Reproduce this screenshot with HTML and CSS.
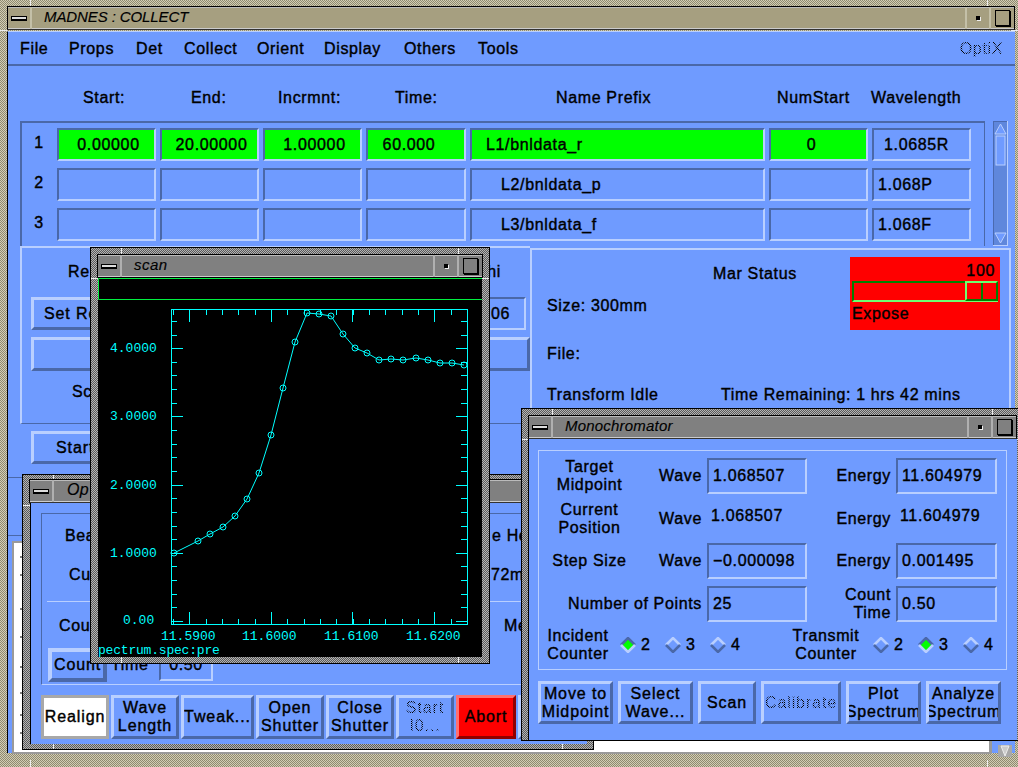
FILE: index.html
```
<!DOCTYPE html>
<html lang="en">
<head>
    <meta charset="UTF-8">
    <title>MADNES : COLLECT</title>
    <link rel="stylesheet" href="styles.css">
</head>
<body>
<div class="desktop">

    <!-- main collect window -->
    <div class="window window-main">
        <div class="titlebar">
            <div class="tb-btn tb-menu"><span class="icon-dash"></span></div>
            <div class="tb-title tb-title-main">MADNES : COLLECT</div>
            <div class="tb-btn tb-min"><span class="icon-dot"></span></div>
            <div class="tb-btn tb-max"><span class="icon-square"></span></div>
        </div>
        <div class="main-body">
            <div class="menubar">
                <span>File</span><span>Props</span><span>Det</span><span>Collect</span>
                <span>Orient</span><span>Display</span><span>Others</span><span>Tools</span>
                <span class="stipple optix">OptiX</span>
            </div>

            <div class="col-heads">
                <span>Start:</span><span>End:</span><span>Incrmnt:</span><span>Time:</span>
                <span>Name Prefix</span><span>NumStart</span><span>Wavelength</span>
            </div>

            <div class="table-row">
                <div class="scan-table">
                    <span class="row-num">1</span>
                    <div class="field on centered">0.00000</div>
                    <div class="field on centered">20.00000</div>
                    <div class="field on centered">1.00000</div>
                    <div class="field on centered off-left">60.000</div>
                    <div class="field on name-first">L1/bnldata_r</div>
                    <div class="field on centered off-left">0</div>
                    <div class="field wave-first">1.0685R</div>

                    <span class="row-num">2</span>
                    <div class="field"></div>
                    <div class="field"></div>
                    <div class="field"></div>
                    <div class="field"></div>
                    <div class="field name-rest">L2/bnldata_p</div>
                    <div class="field"></div>
                    <div class="field">1.068P</div>

                    <span class="row-num">3</span>
                    <div class="field"></div>
                    <div class="field"></div>
                    <div class="field"></div>
                    <div class="field"></div>
                    <div class="field name-rest">L3/bnldata_f</div>
                    <div class="field"></div>
                    <div class="field">1.068F</div>
                </div>
                <svg class="scrollbar" width="15" height="125" viewBox="0 0 15 125">
                    <rect width="15" height="125" fill="#5f87dc"/>
                    <path d="M0 125V0H15" fill="none" stroke="#4a6ab0" stroke-width="2"/>
                    <path d="M15 0V125H0" fill="none" stroke="#b9cfff" stroke-width="2"/>
                    <path d="M7.5 3L13 13H2Z" fill="#6f9bff" stroke="#b9cfff"/>
                    <rect x="3" y="15" width="9" height="29" fill="#6f9bff" stroke="#b9cfff"/>
                    <path d="M7.5 122L13 112H2Z" fill="#6f9bff" stroke="#b9cfff"/>
                </svg>
            </div>

            <div class="panels">
                <div class="panel-left">
                    <div class="pl-row pl-head"><span class="re">Re</span><span>hi</span></div>
                    <div class="pl-row pl-controls">
                        <div class="btn btn-setre">Set Re</div>
                        <div class="field field-phi">06</div>
                    </div>
                    <div class="btn pl-wide"></div>
                    <div class="pl-sc">Sc</div>
                </div>
                <div class="panel-right">
                    <span class="mar-title">Mar Status</span>
                    <div class="mar-box">
                        <span class="mar-pct">100</span>
                        <div class="mar-slider"><div class="mar-thumb"></div></div>
                        <span>Expose</span>
                    </div>
                    <span class="mar-size">Size: 300mm</span>
                    <span class="mar-file">File:</span>
                    <span class="mar-idle">Transform Idle</span>
                    <span class="mar-time">Time Remaining: 1 hrs 42 mins</span>
                </div>
            </div>

            <div class="btn btn-start">Start</div>
            <div class="rule rule-a"></div>
            <div class="rule rule-b"></div>

            <div class="list-row">
                <div class="list-box">
                    <svg class="list-ticks" width="3" height="200" viewBox="0 0 3 200">
                        <path d="M0 14H3M0 32H3M0 66H3M0 94H3M0 124H3M0 150H3M0 172H3M0 190H3" stroke="#000" fill="none"/>
                    </svg>
                </div>
                <div class="list-arrow">
                    <svg width="14" height="12" viewBox="0 0 14 12"><path d="M3 1H11L7 11Z" fill="#ccc" stroke="#eee"/></svg>
                </div>
            </div>
        </div>
    </div>

    <!-- optics window, mostly hidden -->
    <div class="window window-optics">
        <div class="titlebar">
            <div class="tb-btn tb-menu"><span class="icon-dash"></span></div>
            <div class="tb-title tb-title-optics">Op</div>
        </div>
        <div class="optics-body">
            <div class="optics-frame">
                <div class="op-row op-beam"><span>Bea</span><span>e He</span></div>
                <div class="op-row op-cur"><span>Cu</span><span>72mi</span></div>
                <div class="op-sep"></div>
                <div class="op-row op-cou"><span>Cou</span><span>Me</span></div>
                <div class="op-count">
                    <div class="btn btn-count">Count</div>
                    <span class="op-time">Time</span>
                    <div class="field op-val">0.50</div>
                </div>
            </div>
            <div class="optics-btns">
                <div class="btn btn-white">Realign</div>
                <div class="btn">Wave<br>Length</div>
                <div class="btn">Tweak...</div>
                <div class="btn">Open<br>Shutter</div>
                <div class="btn">Close<br>Shutter</div>
                <div class="btn"><span class="stipple">Start<br>I0...</span></div>
                <div class="btn btn-red">Abort</div>
                <div class="btn"></div>
            </div>
        </div>
    </div>

    <!-- scan plot -->
    <div class="window window-scan">
        <div class="titlebar">
            <div class="tb-btn tb-menu"><span class="icon-dash"></span></div>
            <div class="tb-title tb-title-scan">scan</div>
            <div class="tb-btn tb-min"><span class="icon-dot"></span></div>
            <div class="tb-btn tb-max"><span class="icon-square"></span></div>
        </div>
        <svg class="plot" width="384" height="380" viewBox="98 278 384 380">
            <rect x="98" y="278" width="384" height="380" fill="#000"/>
            <path d="M98.5 300.5V279.5H482M98.5 300.5H482" stroke="#00f040" fill="none"/>
            <g class="axes">
                <rect x="171.5" y="310.5" width="296" height="315" fill="none"/>
                <!-- ticks: a wide dashed line gives a row of equal ticks -->
                <line x1="174" y1="623" x2="174" y2="311" stroke-width="6" stroke-dasharray="1 12.64"/>
                <line x1="177" y1="623" x2="177" y2="311" stroke-width="11" stroke-dasharray="1 67.2"/>
                <line x1="464" y1="623" x2="464" y2="311" stroke-width="6" stroke-dasharray="1 12.64"/>
                <line x1="461.5" y1="623" x2="461.5" y2="311" stroke-width="11" stroke-dasharray="1 67.2"/>
                <line x1="173" y1="313.5" x2="467" y2="313.5" stroke-width="5" stroke-dasharray="1 15.34"/>
                <line x1="189" y1="317" x2="467" y2="317" stroke-width="12" stroke-dasharray="1 80.7"/>
                <line x1="173" y1="622.5" x2="467" y2="622.5" stroke-width="5" stroke-dasharray="1 15.34"/>
                <line x1="189" y1="619" x2="467" y2="619" stroke-width="12" stroke-dasharray="1 80.7"/>
            </g>
            <g class="curve">
                <polyline points="174,554 198,542 210,535 223,528 235,517 247,500 259,474 271,436 283,389 295,343 307,314 319,315 331,317 343,335 355,349 367,354 379,361 391,360 403,361 416,359 428,361 440,364 452,364 464,366"/>
                <circle cx="174" cy="554" r="3"/><circle cx="198" cy="542" r="3"/>
                <circle cx="210" cy="535" r="3"/><circle cx="223" cy="528" r="3"/>
                <circle cx="235" cy="517" r="3"/><circle cx="247" cy="500" r="3"/>
                <circle cx="259" cy="474" r="3"/><circle cx="271" cy="436" r="3"/>
                <circle cx="283" cy="389" r="3"/><circle cx="295" cy="343" r="3"/>
                <circle cx="307" cy="314" r="3"/><circle cx="319" cy="315" r="3"/>
                <circle cx="331" cy="317" r="3"/><circle cx="343" cy="335" r="3"/>
                <circle cx="355" cy="349" r="3"/><circle cx="367" cy="354" r="3"/>
                <circle cx="379" cy="361" r="3"/><circle cx="391" cy="360" r="3"/>
                <circle cx="403" cy="361" r="3"/><circle cx="416" cy="359" r="3"/>
                <circle cx="428" cy="361" r="3"/><circle cx="440" cy="364" r="3"/>
                <circle cx="452" cy="364" r="3"/><circle cx="464" cy="366" r="3"/>
            </g>
            <g class="plot-text">
                <text x="110" y="353">4.0000</text>
                <text x="110" y="421">3.0000</text>
                <text x="110" y="490">2.0000</text>
                <text x="110" y="558">1.0000</text>
                <text x="123" y="625">0.00</text>
                <text x="161" y="641">11.5900</text>
                <text x="242" y="641">11.6000</text>
                <text x="324" y="641">11.6100</text>
                <text x="406" y="641">11.6200</text>
                <text class="plot-file" x="98" y="655">pectrum.spec:pre</text>
            </g>
        </svg>
    </div>

    <!-- monochromator -->
    <div class="window window-mono">
        <div class="titlebar">
            <div class="tb-btn tb-menu"><span class="icon-dash"></span></div>
            <div class="tb-title tb-title-mono">Monochromator</div>
            <div class="tb-btn tb-min"><span class="icon-dot"></span></div>
            <div class="tb-btn tb-max"><span class="icon-square"></span></div>
        </div>
        <div class="mono-body">
            <div class="mono-frame">
                <div class="mono-grid">
                    <span class="m-label">Target<br>Midpoint</span>
                    <span class="m-key">Wave</span>
                    <div class="field">1.068507</div>
                    <span class="m-key">Energy</span>
                    <div class="field">11.604979</div>

                    <span class="m-label">Current<br>Position</span>
                    <span class="m-key">Wave</span>
                    <span class="m-read">1.068507</span>
                    <span class="m-key">Energy</span>
                    <span class="m-read">11.604979</span>

                    <span class="m-label">Step Size</span>
                    <span class="m-key">Wave</span>
                    <div class="field">&minus;0.000098</div>
                    <span class="m-key">Energy</span>
                    <div class="field">0.001495</div>

                    <span class="m-key m-points">Number of Points</span>
                    <div class="field">25</div>
                    <span class="m-key m-count">Count<br>Time</span>
                    <div class="field">0.50</div>
                </div>
                <div class="counters">
                    <span class="c-label c-inc">Incident<br>Counter</span>
                    <span class="radio"><svg class="dia" width="16" height="16" viewBox="0 0 16 16"><path class="dia-fill" d="M8 1L15 8L8 15L1 8Z"/><path class="dia-lo" d="M1 8L8 1L15 8"/><path class="dia-hi" d="M1 8L8 15L15 8"/></svg>2</span>
                    <span class="radio"><svg class="dia" width="16" height="16" viewBox="0 0 16 16"><path class="dia-hi" d="M1 8L8 1L15 8"/><path class="dia-lo" d="M1 8L8 15L15 8"/></svg>3</span>
                    <span class="radio"><svg class="dia" width="16" height="16" viewBox="0 0 16 16"><path class="dia-hi" d="M1 8L8 1L15 8"/><path class="dia-lo" d="M1 8L8 15L15 8"/></svg>4</span>
                    <span class="c-label c-trans">Transmit<br>Counter</span>
                    <span class="radio"><svg class="dia" width="16" height="16" viewBox="0 0 16 16"><path class="dia-hi" d="M1 8L8 1L15 8"/><path class="dia-lo" d="M1 8L8 15L15 8"/></svg>2</span>
                    <span class="radio"><svg class="dia" width="16" height="16" viewBox="0 0 16 16"><path class="dia-fill" d="M8 1L15 8L8 15L1 8Z"/><path class="dia-lo" d="M1 8L8 1L15 8"/><path class="dia-hi" d="M1 8L8 15L15 8"/></svg>3</span>
                    <span class="radio"><svg class="dia" width="16" height="16" viewBox="0 0 16 16"><path class="dia-hi" d="M1 8L8 1L15 8"/><path class="dia-lo" d="M1 8L8 15L15 8"/></svg>4</span>
                </div>
            </div>
            <div class="mono-btns">
                <div class="btn">Move to<br>Midpoint</div>
                <div class="btn">Select<br>Wave...</div>
                <div class="btn">Scan</div>
                <div class="btn"><span class="stipple">Calibrate</span></div>
                <div class="btn">Plot<br>Spectrum</div>
                <div class="btn">Analyze<br>Spectrum</div>
            </div>
        </div>
    </div>
</div>
</body>
</html>
```
FILE: styles.css
```
* {
    margin: 0;
    padding: 0;
    box-sizing: border-box;
}

:root {
    --blue: #6f9bff;
    --blue-light: #b9cfff;
    --blue-dark: #4a68a8;
    --beige: #a69f80;
    --gray: #808080;
}

body {
    font-family: 'Liberation Sans', Arial, sans-serif;
    font-size: 16px;
    letter-spacing: 0.65px;
    -webkit-text-stroke: 0.4px #000;
    color: #000;
    background: var(--blue);
    overflow: hidden;
}

.desktop {
    position: relative;
    width: 1018px;
    height: 767px;
    overflow: hidden;
}

/* ---- window frames ---- */
.window {
    position: absolute;
    padding: 6px;
    background:
        linear-gradient(#eee, #eee) 30px 0 / 1px 7px no-repeat,
        linear-gradient(#eee, #eee) calc(100% - 30px) 0 / 1px 7px no-repeat,
        linear-gradient(#eee, #eee) 30px 100% / 1px 7px no-repeat,
        linear-gradient(#eee, #eee) calc(100% - 30px) 100% / 1px 7px no-repeat,
        linear-gradient(#eee, #eee) 0 30px / 7px 1px no-repeat,
        linear-gradient(#eee, #eee) 100% 30px / 7px 1px no-repeat,
        repeating-conic-gradient(var(--frame-a) 0 25%, var(--frame-b) 0 50%) 0 0 / 2px 2px;
}

.window-main {
    --frame-a: #d2cdb4;
    --frame-b: #8f8a70;
    --title: var(--beige);
    left: 0;
    top: 0;
    width: 1018px;
    height: 767px;
    padding: 6px 3px 7px 7px;
}

.window-optics,
.window-scan,
.window-mono {
    --frame-a: #b4b4b4;
    --frame-b: #5a5a5a;
    --title: var(--gray);
    border: 1px solid #000;
}

.window-optics {
    left: 22px;
    top: 474px;
    width: 572px;
    height: 276px;
    padding-top: 4px;
}

.window-scan {
    left: 90px;
    top: 247px;
    width: 400px;
    height: 417px;
}

.window-mono {
    left: 521px;
    top: 408px;
    width: 503px;
    height: 333px;
}

.titlebar {
    display: flex;
    height: 24px;
    background: var(--title);
    border: 1px solid #000;
    border-bottom-color: #333;
    box-shadow: inset 0 2px 0 -1px #bbb, inset 0 -2px 0 -1px #ccc;
}

.tb-btn {
    width: 24px;
    display: flex;
    align-items: center;
    justify-content: center;
    flex: none;
}

.tb-menu {
    border-right: 2px solid #c4c0a8;
}

.tb-min {
    border-left: 2px solid #c4c0a8;
}

.tb-max {
    border-left: 2px solid #c4c0a8;
    width: 25px;
}

.window-scan .tb-btn,
.window-mono .tb-btn,
.window-optics .tb-btn {
    border-color: #b0b0b0;
}

.tb-title {
    flex: 1;
    font-style: italic;
    font-size: 15px;
    line-height: 20px;
    letter-spacing: 0.2px;
    -webkit-text-stroke: 0.15px #000;
    white-space: nowrap;
    overflow: hidden;
}

.tb-title-main { padding-left: 12px; letter-spacing: -0.1px; }
.tb-title-scan { padding-left: 12px; letter-spacing: 0.5px; }
.tb-title-mono { padding-left: 12px; }
.tb-title-optics { padding-left: 13px; font-size: 16px; }

.icon-dash {
    width: 16px;
    height: 5px;
    background: #ddd;
    border: 1px solid #000;
    border-bottom-width: 2px;
}

.icon-dot {
    width: 4px;
    height: 4px;
    background: #000;
    box-shadow: 1px 1px 0 #eee;
}

.icon-square {
    width: 15px;
    height: 16px;
    border: 1px solid #000;
    box-shadow: 1px 1px 0 #000;
}

/* ---- shared controls ---- */
.field {
    height: 100%;
    display: flex;
    align-items: center;
    padding-left: 4px;
    white-space: nowrap;
    overflow: hidden;
    background: var(--blue);
    border: 2px solid var(--blue-dark);
    border-right-color: var(--blue-light);
    border-bottom-color: var(--blue-light);
}

.btn {
    display: flex;
    align-items: center;
    justify-content: center;
    text-align: center;
    line-height: 18px;
    letter-spacing: 0.9px;
    white-space: nowrap;
    overflow: hidden;
    background: var(--blue);
    border: 3px solid var(--blue-light);
    border-right-color: var(--blue-dark);
    border-bottom-color: var(--blue-dark);
}

.btn-white {
    background: #fff;
    border-color: #a8a8a8;
}

.btn-red {
    background: #ff0000;
    border-color: #ff7070 #900000 #900000 #ff7070;
}

/* dithered look of insensitive labels */
.stipple {
    -webkit-text-stroke: 0;
    color: transparent;
    background: repeating-conic-gradient(#000 0 25%, transparent 0 50%) 0 0 / 2px 2px;
    -webkit-background-clip: text;
    background-clip: text;
}

/* ---- main window ---- */
.main-body {
    height: 722px;
    margin-top: 1px;
    background: var(--blue);
    border-top: 1px solid var(--blue-light);
    border-left: 1px solid #000;
    position: relative;
}

.menubar {
    height: 34px;
    padding: 1px 0 0 12px;
    display: grid;
    grid-template-columns: 49px 67px 48px 73px 67px 80px 74px 60px 1fr;
    align-items: center;
    border-bottom: 2px solid var(--blue-dark);
}

.optix {
    justify-self: end;
    margin-right: 12px;
}

.col-heads {
    height: 55px;
    padding: 23px 0 0 75px;
    display: grid;
    grid-template-columns: 108px 87px 117px 161px 221px 94px auto;
    line-height: 18px;
}

.table-row {
    display: flex;
    padding-left: 12px;
    height: 125px;
}

.scan-table {
    width: 965px;
    height: 125px;
    padding: 5px 0 0 0;
    display: grid;
    grid-template-columns: 31px 99px 99px 99px 100px 295px 99px 99px;
    grid-auto-rows: 33px;
    column-gap: 4px;
    row-gap: 7px;
    border: 2px solid var(--blue-dark);
    border-width: 2px 1px 0 2px;
}

.row-num {
    align-self: center;
    justify-self: center;
    margin-left: 3px;
    transform: translateY(-2px);
}

.field.on {
    background: #00ff00;
}

.centered {
    justify-content: center;
}

.off-left {
    padding-right: 18px;
}

.name-first { padding-left: 14px; }
.name-rest { padding-left: 29px; }
.wave-first { padding-left: 10px; }

.scrollbar {
    margin-left: 8px;
    flex: none;
}

.panels {
    display: flex;
    margin-left: 12px;
    height: 178px;
}

.panel-left {
    width: 510px;
    height: 178px;
    padding-left: 9px;
    display: grid;
    grid-template-rows: 42px 33px 34px 1fr;
    row-gap: 7px;
    border: 2px solid var(--blue-light);
    border-right: 0;
    border-bottom: 1px solid var(--blue-dark);
}

.pl-row {
    display: flex;
    justify-content: space-between;
}

.pl-head {
    align-items: center;
    padding: 6px 29px 0 37px;
}

.pl-controls {
    padding-right: 4px;
}

.btn-setre {
    width: 260px;
    justify-content: flex-start;
    padding-left: 10px;
}

.field-phi {
    width: 96px;
    padding-left: 59px;
}

.pl-wide {
    width: 499px;
}

.pl-sc {
    padding: 6px 0 0 41px;
    line-height: 16px;
}

.panel-right {
    width: 481px;
    height: 168px;
    margin-top: 2px;
    padding-left: 15px;
    display: grid;
    grid-template-columns: 166px 137px 150px;
    grid-template-rows: 47px 17px 20px 40px 42px;
    align-items: center;
    border: 2px solid var(--blue-light);
    border-bottom: 0;
}

.mar-title {
    grid-column: 2;
    grid-row: 1;
}

.mar-size {
    grid-column: 1;
    grid-row: 2;
}

.mar-file {
    grid-column: 1;
    grid-row: 4;
}

.mar-idle {
    grid-column: 1;
    grid-row: 5;
}

.mar-time {
    grid-column: 2 / 4;
    grid-row: 5;
    padding-left: 8px;
    white-space: nowrap;
}

.mar-box {
    grid-column: 3;
    grid-row: 1 / 4;
    align-self: start;
    height: 73px;
    margin-top: 7px;
    padding: 5px 2px 0 2px;
    display: flex;
    flex-direction: column;
    background: #ff0000;
    line-height: 18px;
}

.mar-pct {
    align-self: flex-end;
    padding-right: 3px;
}

.mar-slider {
    height: 21px;
    margin: 1px 0 3px;
    display: flex;
    justify-content: flex-end;
    border: 2px solid #008000;
    border-right-color: #70ff70;
    border-bottom-color: #70ff70;
}

.mar-thumb {
    width: 33px;
    margin: -2px -2px 0 0;
    height: 20px;
    border: 2px solid #70ff70;
    border-right-color: #008000;
    border-bottom-color: #008000;
    background: linear-gradient(#008000, #008000) center / 2px 100% no-repeat;
}

.btn-start {
    width: 300px;
    height: 33px;
    margin: 7px 0 0 23px;
    justify-content: flex-start;
    padding-left: 22px;
}

.rule {
    position: absolute;
    left: 0;
    right: 0;
    height: 1px;
    background: var(--blue-dark);
}

.rule-a { top: 445px; }
.rule-b { top: 503px; }

.list-row {
    position: absolute;
    left: 4px;
    right: 0;
    top: 509px;
    height: 213px;
    display: flex;
}

.list-box {
    width: 980px;
    background: #fff;
    border: 2px solid #9a9a9a;
    border-right-width: 3px;
    padding: 0 0 0 6px;
}

.list-ticks {
    display: block;
}

.list-arrow {
    width: 14px;
    height: 12px;
    margin: 204px 0 0 6px;
    display: flex;
    background: #a8a8a8;
}

/* ---- optics window ---- */
.optics-body {
    height: 241px;
    margin-left: 1px;
    background: var(--blue);
    border-left: 1px solid #000;
    padding: 10px 0 0 10px;
}

.optics-frame {
    width: 560px;
    height: 172px;
    border: 1px solid var(--blue-dark);
    border-right-color: var(--blue-light);
    border-bottom-color: var(--blue-light);
    padding-top: 13px;
}

.op-row {
    display: grid;
    height: 18px;
    line-height: 18px;
}

.op-beam {
    grid-template-columns: 427px auto;
    padding-left: 23px;
}

.op-cur {
    margin-top: 21px;
    grid-template-columns: 422px auto;
    padding-left: 27px;
}

.op-sep {
    height: 1px;
    margin: 17px 0 0 5px;
    background: var(--blue-light);
}

.op-cou {
    margin-top: 15px;
    grid-template-columns: 445px auto;
    padding-left: 17px;
}

.op-count {
    margin: 13px 0 0 6px;
    height: 34px;
    display: grid;
    grid-template-columns: 59px 44px 54px;
    column-gap: 4px;
    align-items: center;
}

.btn-count {
    height: 34px;
    border-width: 4px;
    overflow: visible;
    justify-content: flex-start;
    padding-left: 2px;
}

.op-val {
    height: 32px;
    justify-content: center;
    padding-left: 0;
}

.optics-btns {
    margin: 10px 0 0 0;
    height: 44px;
    display: grid;
    grid-template-columns: 68px 68px 73px 68px 68px 58px 60px 60px;
    column-gap: 2px;
}

/* ---- scan plot ---- */
.plot {
    display: block;
    margin: -1px 0 0 1px;
}

.axes {
    stroke: #00ffff;
    shape-rendering: crispEdges;
}

.curve polyline,
.curve circle {
    fill: none;
    stroke: #00ffff;
    stroke-width: 1;
}

.plot-text text {
    font-family: 'Liberation Mono', monospace;
    font-size: 13px;
    letter-spacing: 0;
    fill: #00ffff;
    stroke: none;
    -webkit-text-stroke: 0;
}

.plot-text .plot-file {
    letter-spacing: -0.2px;
}

/* ---- monochromator ---- */
.mono-body {
    height: 302px;
    background: var(--blue);
    border: 1px solid #000;
    border-top: 0;
    border-right: 0;
    padding: 11px 0 0 9px;
}

.mono-frame {
    width: 469px;
    height: 220px;
    border: 1px solid var(--blue-light);
    padding-top: 7px;
}

.mono-grid {
    display: grid;
    grid-template-columns: 101px 62px 105px 84px 106px;
    grid-auto-rows: 36px;
    row-gap: 6.7px;
    align-items: center;
    line-height: 18px;
}

.mono-grid .field {
    margin-left: 5px;
}

.m-label {
    text-align: center;
}

.m-key {
    text-align: right;
}

.m-points {
    grid-column: 1 / 3;
}

.m-read {
    padding: 0 0 5px 9px;
}

.counters {
    margin-top: 5px;
    display: grid;
    grid-template-columns: 74px 7px 45px 45px 45px 32px 78px 8px 45px 45px 45px;
    align-items: center;
    line-height: 18px;
}

.c-label {
    text-align: center;
}

.c-inc {
    grid-column: 1;
    margin-left: 4px;
}

.c-trans {
    grid-column: 7;
}

.c-inc + .radio {
    grid-column: 3;
}

.c-trans + .radio {
    grid-column: 9;
}

.radio {
    display: flex;
    align-items: center;
    gap: 5px;
}

.dia path {
    fill: none;
    stroke-width: 2.5;
}

.dia .dia-hi { stroke: var(--blue-light); }
.dia .dia-lo { stroke: var(--blue-dark); }
.dia .dia-fill { fill: #00ff00; stroke: none; }

.mono-btns {
    margin: 11px 0 0 0;
    height: 43px;
    display: grid;
    grid-template-columns: 75px 75px 58px 80px 75px 75px;
    column-gap: 5px;
}
```
